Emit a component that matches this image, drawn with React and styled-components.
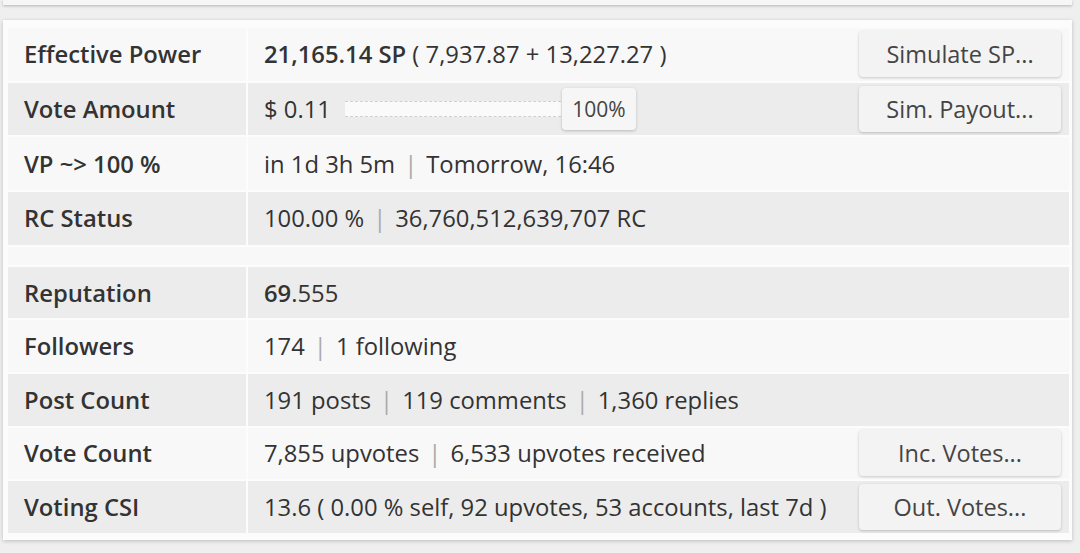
import React from "react";
import styled, { createGlobalStyle } from "styled-components";

const Global = createGlobalStyle`
  html, body { margin: 0; padding: 0; background: #eeeeee; }
  body { font-family: "Open Sans", "Liberation Sans", sans-serif; color: #333; }
`;

const Page = styled.div`
  width: 1080px;
  height: 553px;
  overflow: hidden;
  background: #efefef;
  padding: 0 8px 0 3px;
  box-sizing: border-box;
`;

const PrevCard = styled.div`
  height: 5px;
  background: #f6f6f6;
  box-shadow: 0 1px 3px rgba(0, 0, 0, 0.25);
  margin-bottom: 15px;
`;

const Card = styled.div`
  background: #fcfcfc;
  box-shadow: 0 1px 4px rgba(0, 0, 0, 0.22);
  padding: 6px 1px 5px 3px;
`;

const Table = styled.table`
  width: 100%;
  border-collapse: separate;
  border-spacing: 2px;
  font-size: 23.8px;
`;

const Row = styled.tr`
  background: ${(p) => (p.$shade ? "#ececec" : "#f8f8f8")};
`;

const Label = styled.td`
  width: 222px;
  height: ${(p) => (p.$tall ? "52.7px" : "51.6px")};
  padding: 0 0 0 16px;
  font-weight: 600;
  color: #333;
  white-space: nowrap;
`;

const Value = styled.td`
  padding: 0 8px 0 16px;
  color: #333;
  white-space: nowrap;
`;

const Spacer = styled.td`
  height: 18px;
  padding: 0;
`;

const Line = styled.div`
  display: flex;
  align-items: center;
  justify-content: space-between;
`;

const Text = styled.span`
  display: flex;
  align-items: center;
`;

const Strong = styled.b`
  font-weight: 600;
`;

const Sep = styled.span`
  color: #aaa;
  margin: 0 9px;
`;

const Btn = styled.button`
  width: 202px;
  height: 46px;
  border: none;
  border-radius: 4px;
  background: #f3f3f3;
  box-shadow: 0 1px 3px rgba(0, 0, 0, 0.2);
  font-family: inherit;
  font-size: 23.5px;
  color: #444;
  cursor: pointer;
`;

const Slider = styled.div`
  display: flex;
  align-items: center;
  margin-left: 14px;
`;

const Track = styled.div`
  width: 216px;
  height: 14px;
  background: #fafafa;
  border-top: 1px dashed #cfcfcf;
  border-bottom: 1px dashed #cfcfcf;
`;

const Thumb = styled.div`
  width: 74px;
  height: 42px;
  margin-left: 1px;
  border-radius: 4px;
  background: #f6f6f6;
  box-shadow: 0 1px 3px rgba(0, 0, 0, 0.22);
  display: flex;
  align-items: center;
  justify-content: center;
  font-size: 21px;
  color: #444;
`;

export default function App() {
  return (
    <Page>
      <Global />
      <PrevCard />
      <Card>
        <Table>
          <tbody>
            <Row>
              <Label $tall>Effective Power</Label>
              <Value>
                <Line>
                  <Text>
                    <Strong>21,165.14 SP</Strong>&nbsp;( 7,937.87 + 13,227.27 )
                  </Text>
                  <Btn>Simulate SP...</Btn>
                </Line>
              </Value>
            </Row>
            <Row $shade>
              <Label $tall>Vote Amount</Label>
              <Value>
                <Line>
                  <Text>
                    $ 0.11
                    <Slider>
                      <Track />
                      <Thumb>100%</Thumb>
                    </Slider>
                  </Text>
                  <Btn>Sim. Payout...</Btn>
                </Line>
              </Value>
            </Row>
            <Row>
              <Label $tall>VP ~&gt; 100 %</Label>
              <Value>
                in 1d 3h 5m<Sep>|</Sep>Tomorrow, 16:46
              </Value>
            </Row>
            <Row $shade>
              <Label $tall>RC Status</Label>
              <Value>
                100.00 %<Sep>|</Sep>36,760,512,639,707 RC
              </Value>
            </Row>
            <Row>
              <Spacer colSpan={2} />
            </Row>
            <Row $shade>
              <Label>Reputation</Label>
              <Value>
                <Strong>69</Strong>.555
              </Value>
            </Row>
            <Row>
              <Label>Followers</Label>
              <Value>
                174<Sep>|</Sep>1 following
              </Value>
            </Row>
            <Row $shade>
              <Label>Post Count</Label>
              <Value>
                191 posts<Sep>|</Sep>119 comments<Sep>|</Sep>1,360 replies
              </Value>
            </Row>
            <Row>
              <Label>Vote Count</Label>
              <Value>
                <Line>
                  <Text>
                    7,855 upvotes<Sep>|</Sep>6,533 upvotes received
                  </Text>
                  <Btn>Inc. Votes...</Btn>
                </Line>
              </Value>
            </Row>
            <Row $shade>
              <Label>Voting CSI</Label>
              <Value>
                <Line>
                  <Text>13.6 ( 0.00 % self, 92 upvotes, 53 accounts, last 7d )</Text>
                  <Btn>Out. Votes...</Btn>
                </Line>
              </Value>
            </Row>
          </tbody>
        </Table>
      </Card>
    </Page>
  );
}
